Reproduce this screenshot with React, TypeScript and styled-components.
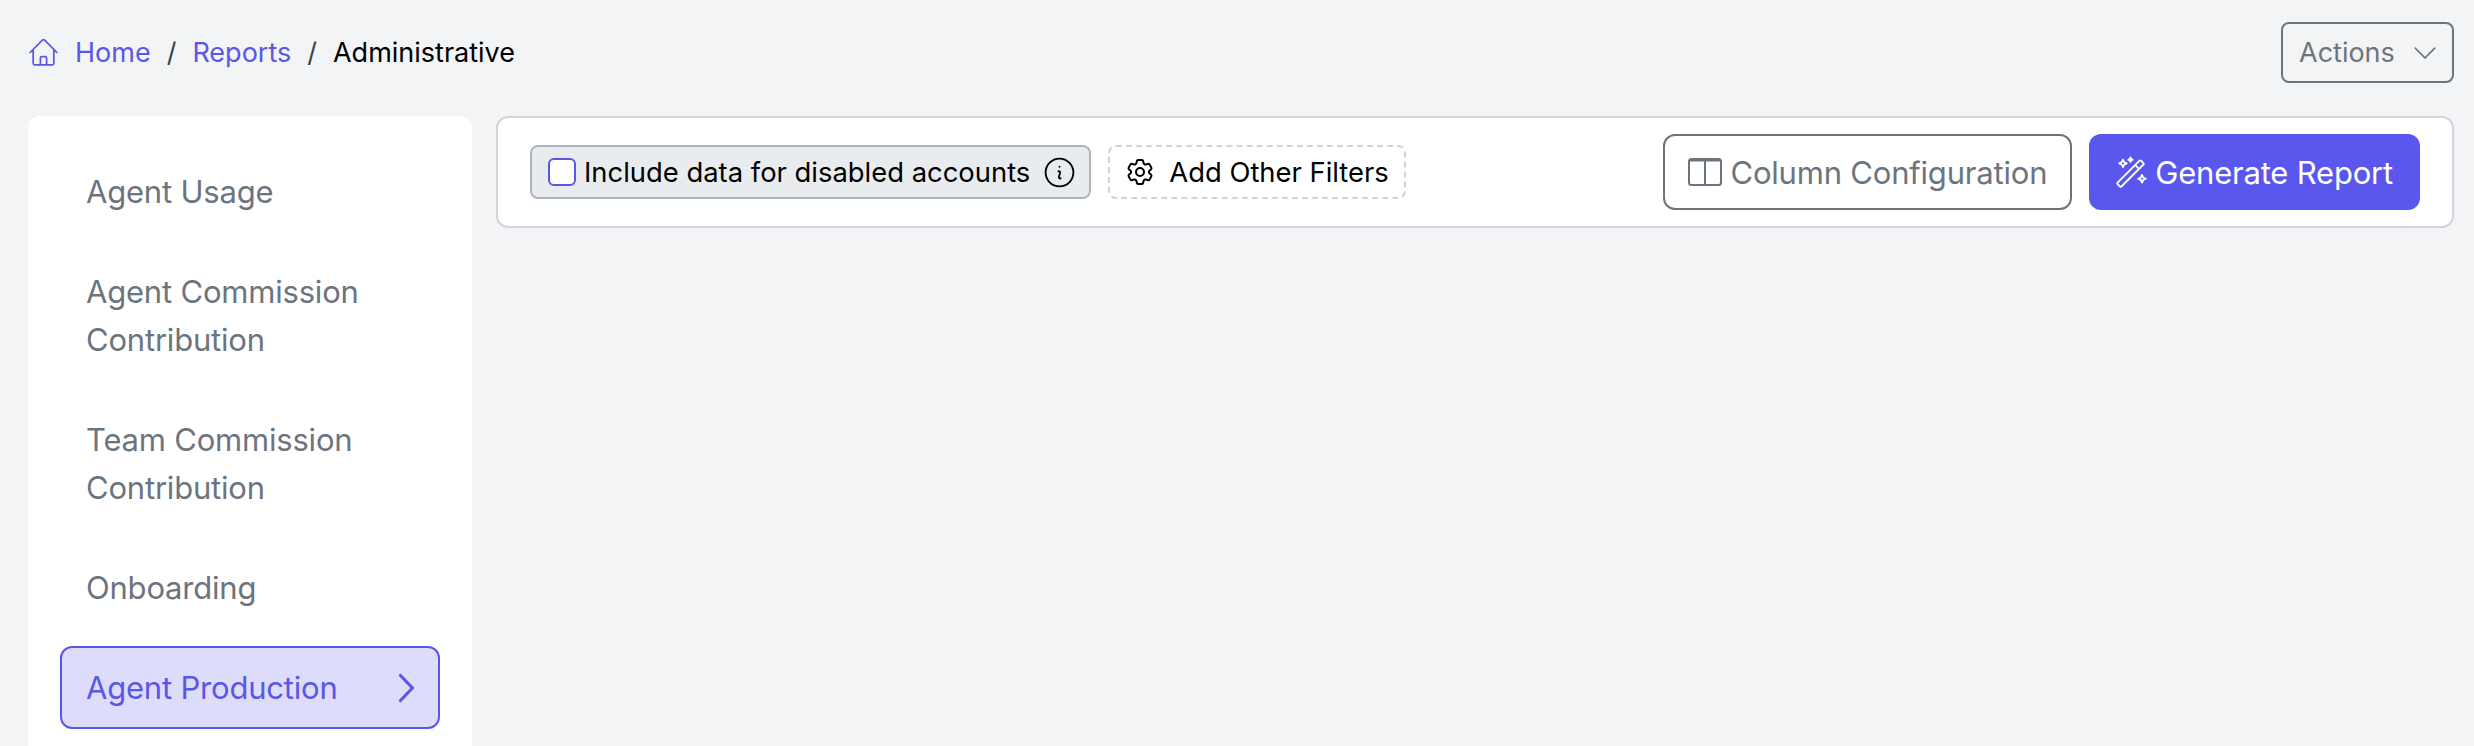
import React from "react";
import styled, { createGlobalStyle } from "styled-components";
import { BsChevronDown } from "react-icons/bs";
import { HiOutlineCog6Tooth, HiOutlineHome, HiOutlineInformationCircle } from "react-icons/hi2";

const GlobalStyle = createGlobalStyle`
  html, body {
    margin: 0;
    height: 100%;
    background: #f3f4f6;
    overflow: hidden;
  }
  body {
    font-family: Inter, "Liberation Sans", sans-serif;
  }
`;

const Page = styled.div`
  padding: 22px 20px 0 28px;
  height: 746px;
  box-sizing: border-box;
  overflow: hidden;
`;

const TopBar = styled.div`
  display: flex;
  align-items: center;
  justify-content: space-between;
  height: 61px;
  margin-bottom: 33px;
`;

const Breadcrumb = styled.nav`
  display: flex;
  align-items: center;
  font-size: 27px;
  line-height: 40px;
`;

const Crumb = styled.a`
  color: #5a57e6;
  text-decoration: none;
`;

const Current = styled.span`
  color: #000;
`;

const Slash = styled.span`
  color: #3c4248;
  margin: 0 16px;
`;

const HomeIcon = styled(HiOutlineHome)`
  width: 33px;
  height: 33px;
  color: #5a57e6;
  margin: 0 15px 0 -1px;
  stroke-width: 1.25;
`;

const ActionsButton = styled.button`
  display: flex;
  align-items: center;
  justify-content: space-between;
  width: 173px;
  height: 61px;
  box-sizing: border-box;
  padding: 0 14px 0 16px;
  background: transparent;
  border: 2px solid #6c757d;
  border-radius: 8px;
  color: #6c757d;
  font: 400 27px Inter, sans-serif;
`;

const Columns = styled.div`
  display: flex;
  gap: 25px;
  align-items: flex-start;
`;

const Sidebar = styled.aside`
  width: 444px;
  flex: none;
  height: 640px;
  box-sizing: border-box;
  padding: 34px 32px;
  background: #fff;
  border-radius: 12px 12px 0 0;
  display: flex;
  flex-direction: column;
  gap: 17px;
`;

const NavItem = styled.a<{ $active?: boolean }>`
  display: flex;
  align-items: center;
  justify-content: space-between;
  box-sizing: border-box;
  padding: 15.5px 23px 15.5px 24px;
  border: 2px solid ${(p) => (p.$active ? "#5a57e6" : "transparent")};
  border-radius: 12px;
  background: ${(p) => (p.$active ? "#dddcfb" : "transparent")};
  color: ${(p) => (p.$active ? "#5a57e6" : "#6c757d")};
  font-size: 31px;
  letter-spacing: -0.2px;
  line-height: 48px;
`;

const Toolbar = styled.section`
  flex: 1;
  height: 112px;
  box-sizing: border-box;
  display: flex;
  align-items: center;
  justify-content: space-between;
  padding: 0 32px;
  margin-left: -1px;
  background: #fff;
  border: 2px solid #d1d5db;
  border-radius: 12px;
`;

const Filters = styled.div`
  display: flex;
  gap: 17px;
`;

const Chip = styled.label`
  display: flex;
  align-items: center;
  height: 54px;
  box-sizing: border-box;
  padding: 0 16px;
  background: #e9ecef;
  border: 2px solid #adb5bd;
  border-radius: 8px;
  color: #000;
  font-size: 27.4px;
  white-space: nowrap;
`;

const Check = styled.span`
  width: 28px;
  height: 28px;
  box-sizing: border-box;
  background: #fff;
  border: 2px solid #5a57e6;
  border-radius: 6px;
  margin-right: 8px;
`;

const ChipInfo = styled(HiOutlineInformationCircle)`
  width: 37px;
  height: 37px;
  margin: 0 -5px 0 11px;
  stroke-width: 1.2;
`;

const AddFilter = styled.button`
  display: flex;
  align-items: center;
  height: 54px;
  box-sizing: border-box;
  padding: 0 15px 0 14px;
  gap: 13px;
  background: #fff;
  border: 2px dashed #ced4da;
  border-radius: 8px;
  color: #000;
  font: 400 27.4px Inter, sans-serif;
  white-space: nowrap;
`;

const GearIcon = styled(HiOutlineCog6Tooth)`
  width: 32px;
  height: 32px;
  stroke-width: 1.5;
`;

const Actions = styled.div`
  display: flex;
  gap: 17px;
`;

const Button = styled.button<{ $primary?: boolean }>`
  display: flex;
  align-items: center;
  gap: ${(p) => (p.$primary ? "7px" : "8px")};
  height: 76px;
  box-sizing: border-box;
  padding: 0 ${(p) => (p.$primary ? "25px" : "23px")};
  border-radius: 12px;
  border: 2px solid ${(p) => (p.$primary ? "#5a57ee" : "#6c757d")};
  background: ${(p) => (p.$primary ? "#5a57ee" : "#fff")};
  color: ${(p) => (p.$primary ? "#fff" : "#6c757d")};
  font: 400 31px Inter, sans-serif;
  letter-spacing: -0.2px;
  white-space: nowrap;
`;

const ChevronRightIcon = () => (
  <svg width="17" height="30" viewBox="0 0 17 30" fill="none">
    <path d="M2.5 2.5L14.5 15L2.5 27.5" stroke="currentColor" strokeWidth="3.2" strokeLinecap="round" strokeLinejoin="round" />
  </svg>
);

const ColumnsIcon = () => (
  <svg width="34" height="28" viewBox="0 0 34 28" fill="none">
    <rect x="1" y="1" width="32" height="26" rx="2.5" stroke="currentColor" strokeWidth="2" />
    <path d="M1 2.5h32M17 2v25" stroke="currentColor" strokeWidth="2" />
  </svg>
);

const WandIcon = () => (
  <svg width="32" height="32" viewBox="0 0 32 32" fill="none" stroke="currentColor" strokeWidth="1.8" strokeLinejoin="round">
    <path d="M1.6 27.2L23.6 5.2a1 1 0 0 1 1.4 0l2.4 2.4a1 1 0 0 1 0 1.4L5.4 31a1 1 0 0 1-1.4 0l-2.4-2.4a1 1 0 0 1 0-1.4z" transform="translate(0 -0.5)" />
    <path d="M19.4 9.4l3.8 3.8" />
    <path d="M7 3.6l1.2 2.6 2.6 1.2-2.6 1.2L7 11.2 5.8 8.6 3.2 7.4l2.6-1.2z" />
    <path d="M14.5 1.5l.7 1.5 1.5.7-1.5.7-.7 1.5-.7-1.5-1.5-.7 1.5-.7z" />
    <path d="M26 19l1.2 2.6 2.6 1.2-2.6 1.2-1.2 2.6-1.2-2.6-2.6-1.2 2.6-1.2z" />
  </svg>
);

const navItems = [
  "Agent Usage",
  "Agent Commission Contribution",
  "Team Commission Contribution",
  "Onboarding",
];

export default function App() {
  return (
    <>
      <GlobalStyle />
      <Page>
        <TopBar>
          <Breadcrumb>
            <HomeIcon />
            <Crumb>Home</Crumb>
            <Slash>/</Slash>
            <Crumb>Reports</Crumb>
            <Slash>/</Slash>
            <Current>Administrative</Current>
          </Breadcrumb>
          <ActionsButton>
            Actions
            <BsChevronDown size={26} />
          </ActionsButton>
        </TopBar>
        <Columns>
          <Sidebar>
            {navItems.map((item) => (
              <NavItem key={item}>{item}</NavItem>
            ))}
            <NavItem $active>
              Agent Production
              <ChevronRightIcon />
            </NavItem>
          </Sidebar>
          <Toolbar>
            <Filters>
              <Chip>
                <Check />
                Include data for disabled accounts
                <ChipInfo />
              </Chip>
              <AddFilter>
                <GearIcon />
                Add Other Filters
              </AddFilter>
            </Filters>
            <Actions>
              <Button>
                <ColumnsIcon />
                Column Configuration
              </Button>
              <Button $primary>
                <WandIcon />
                Generate Report
              </Button>
            </Actions>
          </Toolbar>
        </Columns>
      </Page>
    </>
  );
}
